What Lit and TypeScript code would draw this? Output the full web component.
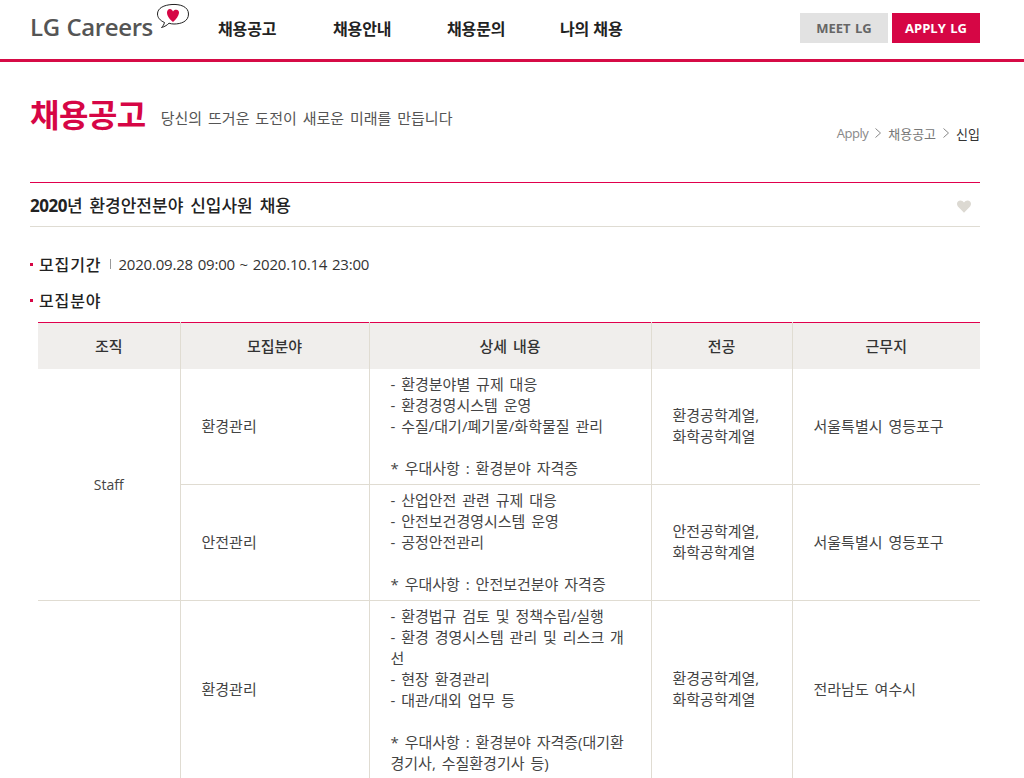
import { LitElement, html, css } from 'lit';
import { customElement } from 'lit/decorators.js';

interface Job {
  field: string;
  details: string[];
  major: string[];
  place: string;
}

const JOBS: Job[] = [
  {
    field: '환경관리',
    details: ['- 환경분야별 규제 대응', '- 환경경영시스템 운영', '- 수질/대기/폐기물/화학물질 관리', '', '* 우대사항 : 환경분야 자격증'],
    major: ['환경공학계열,', '화학공학계열'],
    place: '서울특별시 영등포구'
  },
  {
    field: '안전관리',
    details: ['- 산업안전 관련 규제 대응', '- 안전보건경영시스템 운영', '- 공정안전관리', '', '* 우대사항 : 안전보건분야 자격증'],
    major: ['안전공학계열,', '화학공학계열'],
    place: '서울특별시 영등포구'
  },
  {
    field: '환경관리',
    details: ['- 환경법규 검토 및 정책수립/실행', '- 환경 경영시스템 관리 및 리스크 개', '선', '- 현장 환경관리', '- 대관/대외 업무 등', '', '* 우대사항 : 환경분야 자격증(대기환', '경기사, 수질환경기사 등)'],
    major: ['환경공학계열,', '화학공학계열'],
    place: '전라남도 여수시'
  }
];

@customElement('app-root')
export class AppRoot extends LitElement {
  static styles = css`
    :host {
      display: block;
      height: 778px;
      overflow: hidden;
      background: #fff;
      color: #333;
      font-family: "Open Sans", "Noto Sans CJK KR", sans-serif;
      font-size: 14px;
    }

    .header {
      display: flex;
      align-items: flex-start;
      height: 59px;
      padding: 0 44px 0 30px;
      border-bottom: 3px solid #d60b46;
    }

    .logo {
      position: relative;
      width: 188px;
      height: 59px;
      flex: none;
    }

    .logo-text {
      position: absolute;
      left: 0;
      top: 11px;
      font-size: 24px;
      line-height: 32px;
      font-weight: 600;
      color: #555;
      white-space: nowrap;
      letter-spacing: -0.4px;
      word-spacing: 1px;
    }

    .logo svg {
      position: absolute;
      left: 126px;
      top: 3px;
    }

    .nav {
      display: flex;
      flex: 1;
      padding: 17px 0 0 0;
      font-size: 16px;
      line-height: 24px;
      font-weight: 700;
      color: #222;
    }

    .nav span {
      width: 114px;
      letter-spacing: -0.1px;
    }

    .nav span:nth-child(1) { width: 115px; }
    .nav span:nth-child(2) { width: 114px; }
    .nav span:nth-child(3) { width: 113px; }

    .buttons {
      display: flex;
      gap: 4px;
      padding-top: 13px;
    }

    .btn {
      width: 88px;
      height: 30px;
      display: flex;
      align-items: center;
      justify-content: center;
      font-size: 13px;
      font-weight: 700;
      word-spacing: 1px;
      background: #e2e2e2;
      color: #666;
    }

    .btn.apply {
      background: #d60645;
      color: #fff;
    }

    .content {
      padding: 0 44px 0 30px;
    }

    .page-head {
      display: flex;
      height: 121px;
      box-sizing: border-box;
      border-bottom: 1px solid #e0004d;
      padding-top: 30px;
    }

    .page-title {
      font-size: 32px;
      line-height: 46px;
      font-weight: 700;
      color: #d60645;
      letter-spacing: -0.5px;
    }

    .page-sub {
      margin: 14px 0 0 15px;
      font-size: 15px;
      line-height: 24px;
      word-spacing: 2px;
      color: #555;
    }

    .crumbs {
      display: flex;
      margin-left: auto;
      align-items: center;
      gap: 7px;
      height: 20px;
      margin-top: 31px;
      font-size: 13px;
      color: #777;
    }

    .crumbs svg {
      display: block;
    }

    .crumbs .apply {
      color: #888;
      letter-spacing: -0.5px;
    }

    .crumbs .now {
      color: #333;
    }

    .job-title {
      display: flex;
      align-items: center;
      justify-content: space-between;
      height: 43px;
      border-bottom: 1px solid #dfdcd3;
      font-size: 17px;
      font-weight: 500;
      word-spacing: 2.5px;
      color: #222;
    }

    .job-title b {
      font-weight: 700;
      letter-spacing: -0.5px;
    }

    .job-title svg {
      margin: 4px 9px 0 0;
    }

    .info {
      display: flex;
      align-items: center;
      height: 20px;
      font-size: 15px;
      letter-spacing: -0.2px;
      word-spacing: 1px;
      color: #333;
    }

    .period {
      margin-top: 27px;
    }

    .field {
      margin-top: 16px;
    }

    .info b {
      color: #222;
      font-weight: 500;
      font-size: 16px;
      letter-spacing: 0.9px;
    }

    .info::before {
      content: "";
      width: 3px;
      height: 3px;
      margin-right: 6px;
      background: #d60645;
    }

    .sep {
      width: 1px;
      height: 10px;
      margin: 0 7px 0 9px;
      background: #999;
    }

    table {
      width: 942px;
      margin: 12px 0 0 8px;
      border-collapse: collapse;
      table-layout: fixed;
      border-top: 1px solid #e0004d;
      font-size: 15px;
      line-height: 21px;
      word-spacing: 2px;
    }

    th {
      height: 46px;
      padding: 0;
      background: #f0eeec;
      font-size: 15px;
      font-weight: 500;
      color: #333;
      border-left: 1px solid #e0dcd2;
    }

    td {
      padding: 5px 10px 5px 21px;
      border-left: 1px solid #e0dcd2;
      border-bottom: 1px solid #e0dcd2;
      vertical-align: middle;
      white-space: nowrap;
      color: #444;
    }

    td.major {
      padding-top: 4px;
      padding-bottom: 6px;
    }

    tr.long td.field-cell,
    tr.long td.place {
      padding-bottom: 7px;
    }

    th:first-child,
    td.org {
      border-left: 0;
    }

    td.org {
      padding: 0;
      text-align: center;
      font-size: 14px;
    }
  `;

  renderHeart() {
    return html`
      <svg width="14" height="13" viewBox="0 0 16 14">
        <path fill="#dcd9d2" d="M8 14 1.600 7.500C.4 6.200 0 5 0 3.800 0 1.600 1.700 0 3.900 0 5.600 0 7 .9 8 2.400 9 .9 10.400 0 12.100 0 14.300 0 16 1.600 16 3.800c0 1.200-.4 2.400-1.600 3.700Z"/>
      </svg>
    `;
  }

  renderChevron() {
    return html`
      <svg width="6" height="10" viewBox="0 0 6 10">
        <path fill="none" stroke="#888" d="M.5 .5 5.500 5 .5 9.500"/>
      </svg>
    `;
  }

  render() {
    return html`
      <div class="header">
        <div class="logo">
          <span class="logo-text">LG Careers</span>
          <svg width="34" height="27" viewBox="0 0 34 27">
            <path fill="#fff" stroke="#222" stroke-width="1" d="M16 1.500C24 1 32.500 3.500 32.500 11S25 21 18 21c-2 0-3.500-.3-5-.8-1.500 1.500-4 3.500-7.500 4.300 1.500-1.500 2.500-3 3-5C4 17.500 1.500 14.500 1.500 11 1.500 5 8 2 16 1.500Z"/>
            <path fill="#d60645" d="M17 19c-3-2.500-6-5.500-6-9.500 0-2 1.500-3.800 3-3.600 1.300.1 2.400 1 3 2.500.7-1.200 2-1.900 3.300-1.700 1.800.2 2.900 1.600 2.700 3.300-.3 3-3 6.500-6 9Z"/>
          </svg>
        </div>
        <div class="nav">
          <span>채용공고</span><span>채용안내</span><span>채용문의</span><span>나의 채용</span>
        </div>
        <div class="buttons">
          <div class="btn">MEET LG</div>
          <div class="btn apply">APPLY LG</div>
        </div>
      </div>
      <div class="content">
        <div class="page-head">
          <div class="page-title">채용공고</div>
          <div class="page-sub">당신의 뜨거운 도전이 새로운 미래를 만듭니다</div>
          <div class="crumbs">
            <span class="apply">Apply</span>${this.renderChevron()}<span>채용공고</span>${this.renderChevron()}<span class="now">신입</span>
          </div>
        </div>
        <div class="job-title">
          <span><b>2020</b>년 환경안전분야 신입사원 채용</span>
          ${this.renderHeart()}
        </div>
        <div class="info period">
          <b>모집기간</b><i class="sep"></i>2020.09.28 09:00 ~ 2020.10.14 23:00
        </div>
        <div class="info field"><b>모집분야</b></div>
        <table>
          <colgroup>
            <col style="width:142px" /><col style="width:189px" /><col style="width:282px" /><col style="width:141px" /><col style="width:188px" />
          </colgroup>
          <thead>
            <tr><th>조직</th><th>모집분야</th><th>상세 내용</th><th>전공</th><th>근무지</th></tr>
          </thead>
          <tbody>
            ${JOBS.map((job, i) => html`
              <tr class=${i === 2 ? 'long' : ''}>
                ${i === 0 ? html`<td class="org" rowspan="2">Staff</td>` : i === 2 ? html`<td class="org"></td>` : ''}
                <td class="field-cell">${job.field}</td>
                <td>${job.details.map(line => html`<div>${line || html`&nbsp;`}</div>`)}</td>
                <td class="major">${job.major.map(line => html`<div>${line}</div>`)}</td>
                <td class="place">${job.place}</td>
              </tr>
            `)}
          </tbody>
        </table>
      </div>
    `;
  }
}
